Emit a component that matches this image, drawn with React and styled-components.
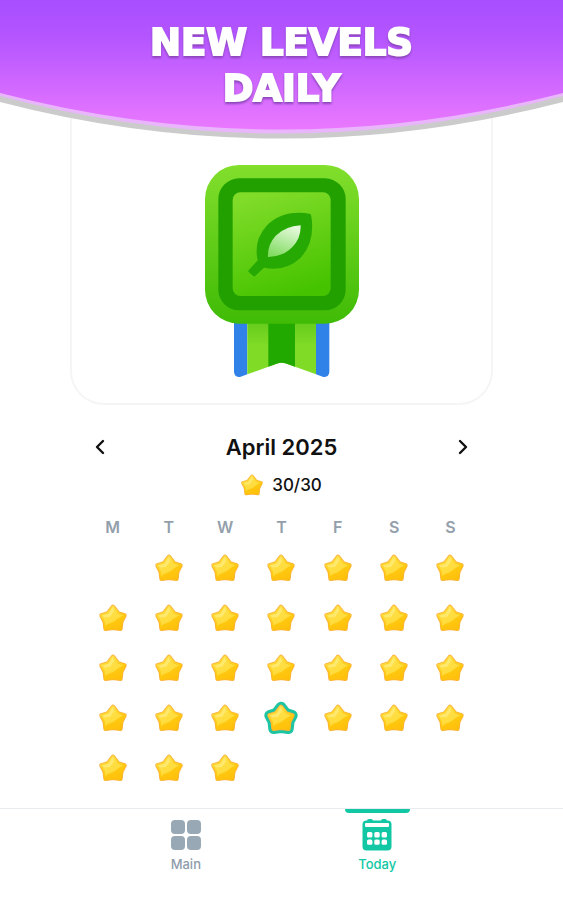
import styled, { createGlobalStyle } from 'styled-components'

const WEEKDAYS = [
	['M', 'Monday'],
	['T', 'Tuesday'],
	['W', 'Wednesday'],
	['T', 'Thursday'],
	['F', 'Friday'],
	['S', 'Saturday'],
	['S', 'Sunday'],
]
const DAYS_IN_MONTH = 30
const FIRST_WEEKDAY = 1
const TODAY = 24

const weeks = []
for (let start = 1 - FIRST_WEEKDAY; start <= DAYS_IN_MONTH; start += 7) {
	weeks.push(
		WEEKDAYS.map((_, i) => {
			const day = start + i
			return day >= 1 && day <= DAYS_IN_MONTH ? day : null
		})
	)
}

const STAR =
	'M14 3 L19 9.4 L25.4 11.4 L22.2 17.6 L21.4 24.8 L14 23.8 L6.6 24.8 L5.8 17.6 L2.6 11.4 L9 9.4 Z'

const Star = ({ size = 28, selected }) => (
	<StarSvg viewBox="0 0 28 28" width={size} height={size} aria-hidden="true">
		{selected && (
			<path d={STAR} fill="#1dc5a3" stroke="#1dc5a3" strokeWidth="10.6" />
		)}
		<path d={STAR} fill="#fbb03a" stroke="#fbb03a" strokeWidth="4.6" />
		<path d={STAR} fill="url(#starFill)" stroke="url(#starFill)" strokeWidth="3" />
		<path
			d="M14 2.4 L18.6 9.6 L24 11.4 Q20 13 17 16 Q14 18.6 11 19.2 Q8.2 20 6.2 22 L5.8 17.4 L2.8 11.4 L9.2 9.6 Z"
			fill="#ffe14a"
			fillOpacity="0.8"
		/>
		<path
			d="M14 3 L15 7 L11 13 L5.4 13.4 L3.4 11.6 L9.6 9.8 Z"
			fill="#fff08a"
			fillOpacity="0.6"
		/>
	</StarSvg>
)

const Medal = () => (
	<MedalSvg viewBox="45 45 462 636" role="img" aria-label="Green leaf medal">
		<defs>
			<linearGradient id="medalFrame" x1="0" y1="0" x2="0" y2="1">
				<stop offset="0" stopColor="#82df2c" />
				<stop offset="1" stopColor="#3fbb06" />
			</linearGradient>
			<linearGradient id="medalFace" x1="0.3" y1="0" x2="0.6" y2="1">
				<stop offset="0" stopColor="#81dc29" />
				<stop offset="1" stopColor="#45c300" />
			</linearGradient>
			<linearGradient id="ribbon" x1="0" y1="0" x2="0" y2="1">
				<stop offset="0" stopColor="#5fc819" />
				<stop offset="0.5" stopColor="#7fdb26" />
			</linearGradient>
			<linearGradient id="leaf" x1="0.7" y1="0" x2="0.3" y2="1">
				<stop offset="0" stopColor="#e6fadd" />
				<stop offset="1" stopColor="#82dc62" />
			</linearGradient>
		</defs>
		<path d="M132 500 V666 Q134 684 152 680 L172 673 V500 Z" fill="#3182e8" />
		<path d="M418 500 V666 Q416 684 398 680 L378 673 V500 Z" fill="#3182e8" />
		<path d="M172 500 H378 V673 L290 641 Q275 635 260 641 L172 673 Z" fill="url(#ribbon)" />
		<path d="M235 500 H315 V650 L290 641 Q275 635 260 641 L235 650 Z" fill="#22a900" />
		<rect x="45" y="45" width="462" height="476" rx="102" fill="url(#medalFrame)" />
		<rect x="85" y="85" width="382" height="396" rx="62" fill="#21a000" />
		<rect x="128" y="127" width="294" height="311" rx="23" fill="url(#medalFace)" />
		<path
			d="M359 191 Q278 178 230 227 Q190 271 203 331 L174 363 Q183 375 193 380 L222 353 Q286 366 332 323 Q376 276 364 199 Q363 192 359 191 Z"
			fill="#27a904"
		/>
		<path
			d="M332 226 Q286 229 257 257 Q232 285 234 321 Q280 320 307 291 Q333 266 332 226 Z"
			fill="url(#leaf)"
		/>
	</MedalSvg>
)

const GridIcon = () => (
	<svg width="32" height="32" viewBox="0 0 32 32" fill="#99a8b5" aria-hidden="true">
		<rect x="1" y="1" width="14" height="14" rx="4" />
		<rect x="17" y="1" width="14" height="14" rx="4" />
		<rect x="1" y="17" width="14" height="14" rx="4" />
		<rect x="17" y="17" width="14" height="14" rx="4" />
	</svg>
)

const CalendarIcon = () => (
	<svg width="32" height="32" viewBox="0 0 32 32" fill="#12c8a4" aria-hidden="true">
		<rect x="1.5" y="1.5" width="29" height="30" rx="4" />
		<rect x="6" y="0" width="6" height="5" rx="2" />
		<rect x="20" y="0" width="6" height="5" rx="2" />
		<g fill="#fff">
			<rect x="4" y="4" width="24" height="4" rx="1" />
			<rect x="6" y="13" width="5.4" height="5.4" rx="1.5" />
			<rect x="13.3" y="13" width="5.4" height="5.4" rx="1.5" />
			<rect x="20.6" y="13" width="5.4" height="5.4" rx="1.5" />
			<rect x="6" y="20.4" width="5.4" height="5.4" rx="1.5" />
			<rect x="13.3" y="20.4" width="5.4" height="5.4" rx="1.5" />
			<rect x="20.6" y="20.4" width="5.4" height="5.4" rx="1.5" />
		</g>
	</svg>
)

const Chevron = ({ d }) => (
	<svg width="12" height="18" viewBox="0 0 12 18" fill="none" aria-hidden="true">
		<path d={d} stroke="#111" strokeWidth="2.4" strokeLinecap="round" strokeLinejoin="round" />
	</svg>
)

const App = () => {
	return (
		<Page>
			<GlobalStyle />
			<Banner>
				<BannerShape viewBox="0 0 563 140" preserveAspectRatio="none" aria-hidden="true">
					<defs>
						<linearGradient id="banner" gradientUnits="userSpaceOnUse" x1="0" y1="0" x2="0" y2="130">
							<stop offset="0" stopColor="#a84eff" />
							<stop offset="0.3" stopColor="#b556ff" />
							<stop offset="1" stopColor="#eb79ff" />
						</linearGradient>
						<linearGradient id="starFill" x1="0.3" y1="0" x2="0.7" y2="1">
							<stop offset="0" stopColor="#ffe04a" />
							<stop offset="0.6" stopColor="#ffc910" />
							<stop offset="1" stopColor="#ffc00c" />
						</linearGradient>
					</defs>
					<path d="M0 0 H563 V102 Q281 175 0 102 Z" fill="#cbcbcb" />
					<path d="M0 0 H563 V96 Q281 171 0 96 Z" fill="#e9b6fb" />
					<path d="M0 0 H563 V93 Q281 166 0 93 Z" fill="url(#banner)" />
				</BannerShape>
				<BannerTitle>
					NEW LEVELS
					<br />
					DAILY
				</BannerTitle>
			</Banner>
			<Content>
				<MedalCard>
					<Medal />
				</MedalCard>
				<Calendar>
					<MonthBar>
						<ArrowButton type="button" aria-label="Previous month">
							<Chevron d="M9 3 L3 9 L9 15" />
						</ArrowButton>
						<MonthTitle>April 2025</MonthTitle>
						<ArrowButton type="button" aria-label="Next month">
							<Chevron d="M3 3 L9 9 L3 15" />
						</ArrowButton>
					</MonthBar>
					<Score>
						<Star size={22} />
						<span>30/30</span>
					</Score>
					<DayTable>
						<thead>
							<tr>
								{WEEKDAYS.map(([letter, name]) => (
									<Weekday key={name} scope="col" abbr={name}>
										{letter}
									</Weekday>
								))}
							</tr>
						</thead>
						<tbody>
							{weeks.map((week, row) => (
								<tr key={row}>
									{week.map((day, index) => (
										<DayCell key={index}>
											{day && (
												<DayButton type="button" aria-label={`April ${day}`}>
													<Star selected={day === TODAY} />
												</DayButton>
											)}
										</DayCell>
									))}
								</tr>
							))}
						</tbody>
					</DayTable>
				</Calendar>
			</Content>
			<TabBar>
				<Tab type="button">
					<GridIcon />
					Main
				</Tab>
				<Tab type="button" $active aria-current="page">
					<CalendarIcon />
					Today
				</Tab>
			</TabBar>
		</Page>
	)
}

export default App

const GlobalStyle = createGlobalStyle`
	* {
		box-sizing: border-box;
	}
	body {
		margin: 0;
		background: #fff;
		font-family: Inter, 'Liberation Sans', sans-serif;
	}
	button {
		padding: 0;
		border: 0;
		background: none;
		font-family: inherit;
		cursor: pointer;
	}
`

const Page = styled.div`
	display: flex;
	flex-direction: column;
	min-height: 100vh;
`

const Banner = styled.header`
	position: relative;
	z-index: 1;
	height: 140px;
	padding-top: 20px;
`

const BannerShape = styled.svg`
	position: absolute;
	inset: 0;
	width: 100%;
	height: 100%;
`

const BannerTitle = styled.h1`
	position: relative;
	margin: 0;
	color: #fff;
	font-family: 'DejaVu Sans', sans-serif;
	font-size: 37px;
	font-weight: 700;
	line-height: 46px;
	text-align: center;
	-webkit-text-stroke: 2px #fff;
	paint-order: stroke fill;
	stroke-linejoin: round;
	filter: drop-shadow(0 2px 1px #8a45b8);
`

const Content = styled.main`
	flex: 1;
	display: flex;
	flex-direction: column;
	align-items: center;
`

const MedalCard = styled.section`
	display: flex;
	justify-content: center;
	width: 75%;
	margin-top: -40px;
	padding: 65px 0 26px;
	border: 2px solid #f5f5f5;
	border-top: 0;
	border-radius: 0 0 34px 34px;
`

const MedalSvg = styled.svg`
	display: block;
	width: 154px;
	height: 212px;
`

const Calendar = styled.section`
	width: 70%;
	padding-top: 26px;
`

const MonthBar = styled.div`
	display: flex;
	align-items: center;
	justify-content: space-between;
	height: 32px;
`

const ArrowButton = styled.button`
	display: flex;
	align-items: center;
	justify-content: center;
	width: 32px;
	height: 32px;
`

const MonthTitle = styled.h2`
	margin: 0;
	color: #111;
	font-size: 22px;
	font-weight: 600;
	line-height: 32px;
`

const Score = styled.div`
	display: flex;
	align-items: center;
	justify-content: center;
	gap: 9px;
	height: 44px;
	color: #111;
	font-size: 17px;
	font-weight: 500;
`

const DayTable = styled.table`
	width: 100%;
	table-layout: fixed;
	border-collapse: collapse;
`

const Weekday = styled.th`
	height: 36px;
	padding: 4px 0 0;
	color: #93a0ac;
	font-size: 16px;
	font-weight: 600;
`

const DayCell = styled.td`
	height: 50px;
	padding: 0;
	text-align: center;
`

const DayButton = styled.button`
	display: inline-flex;
	vertical-align: middle;
`

const StarSvg = styled.svg`
	display: block;
	overflow: visible;
	stroke-linejoin: round;
`

const TabBar = styled.nav`
	display: flex;
	justify-content: center;
	height: 92px;
	border-top: 1px solid #e9ecee;
`

const Tab = styled.button`
	position: relative;
	display: flex;
	flex-direction: column;
	align-items: center;
	gap: 3px;
	width: 34%;
	padding-top: 10px;
	color: ${({ $active }) => ($active ? '#12c8a4' : '#8e9cab')};
	font-size: 13px;
	font-weight: 500;
	line-height: 20px;

	&::before {
		content: '';
		position: absolute;
		top: 0;
		width: 65px;
		height: 4px;
		border-radius: 0 0 4px 4px;
		background: ${({ $active }) => ($active ? '#12c8a4' : 'transparent')};
	}
`
